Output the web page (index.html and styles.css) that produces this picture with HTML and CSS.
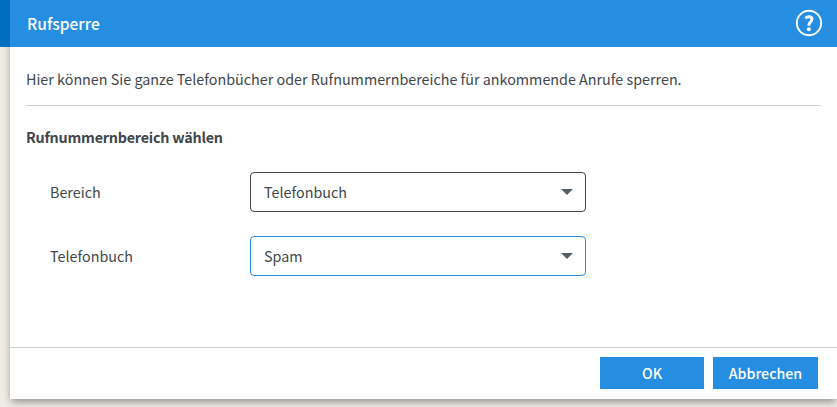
FILE: index.html
```html
<!DOCTYPE html>
<html lang="de">
<head>
<meta charset="utf-8">
<title>Rufsperre</title>
<link rel="stylesheet" href="styles.css">
</head>
<body>
<main class="dialog">
  <header class="dialog-header">
    <h1 class="title">Rufsperre</h1>
    <svg class="help" viewBox="0 0 28 28" role="img" aria-label="Hilfe">
      <circle cx="14" cy="14" r="12.2" fill="none" stroke="#fff" stroke-width="1.9"/>
      <path d="M10.4 9.2C12.6 7 17.1 7.2 16.9 10.5C16.8 13.1 13.7 13.3 13.8 16.7" fill="none" stroke="#fff" stroke-width="2.9"/>
      <circle cx="13.8" cy="20.2" r="2" fill="#fff"/>
    </svg>
  </header>
  <section class="content">
    <p class="intro">Hier können Sie ganze Telefonbücher oder Rufnummernbereiche für ankommende Anrufe sperren.</p>
    <h2 class="section-title">Rufnummernbereich wählen</h2>
    <div class="row">
      <span class="label">Bereich</span>
      <div class="select"><span>Telefonbuch</span><svg class="arrow" viewBox="0 0 12 6"><path d="M0 0H12L6 6Z"/></svg></div>
    </div>
    <div class="row">
      <span class="label">Telefonbuch</span>
      <div class="select active"><span>Spam</span><svg class="arrow" viewBox="0 0 12 6"><path d="M0 0H12L6 6Z"/></svg></div>
    </div>
  </section>
  <footer class="actions">
    <button class="btn ok">OK</button>
    <button class="btn cancel">Abbrechen</button>
  </footer>
</main>
</body>
</html>
```
FILE: styles.css
```css
* { box-sizing: border-box; }
body {
  margin: 0;
  height: 407px;
  overflow: hidden;
  padding-left: 10px;
  background: linear-gradient(#006ec0 47px, #f0ede6 47px);
  color: #3f464c;
  font: 14.33px/24px "Noto Sans CJK SC", sans-serif;
}
.dialog {
  display: flex;
  flex-direction: column;
  height: 399px;
  background: #fff;
  box-shadow: 0 50px 0 -50px #fff, 0 4px 8px -1px rgba(0, 0, 0, .4);
  clip-path: polygon(0 0, 100% 0, 100% 110%, -10px 110%, -10px 47px, 0 47px);
}
.dialog-header {
  display: flex;
  align-items: center;
  justify-content: space-between;
  height: 47px;
  padding: 0 14px 0 17px;
  background: #268ee0;
  color: #fff;
}
.title { margin: -2px 0 0; font-size: 15.6px; font-weight: 500; }
.help { width: 28px; height: 28px; margin-top: -2px; }
.content { flex: 1; padding: 20px 16px 0; }
.intro {
  height: 39px;
  margin: 0;
  border-bottom: 1px solid #cfd0d1;
  white-space: nowrap;
}
.section-title { margin: 19px 0 23px; font-size: 14.33px; font-weight: 700; letter-spacing: -.22px; }
.row { display: flex; align-items: center; height: 40px; margin-bottom: 24px; padding-left: 24px; }
.label { width: 200px; }
.select {
  display: flex;
  align-items: center;
  justify-content: space-between;
  width: 336px;
  height: 40px;
  padding: 0 12px 0 13px;
  border: 1px solid #3f464c;
  border-radius: 4px;
}
.select.active { border-color: #268ee0; }
.arrow { width: 12px; height: 6px; fill: #555e66; }
.actions {
  display: flex;
  gap: 9px;
  justify-content: flex-end;
  height: 52px;
  padding: 9px 19px 0 0;
  border-top: 1px solid #cfd0d1;
}
.btn {
  height: 32px;
  padding: 0;
  border: 0;
  background: #268ee0;
  color: #fff;
  font: 500 14.2px/32px "Noto Sans CJK SC", sans-serif;
}
.ok { width: 104px; }
.cancel { width: 105px; }
```
